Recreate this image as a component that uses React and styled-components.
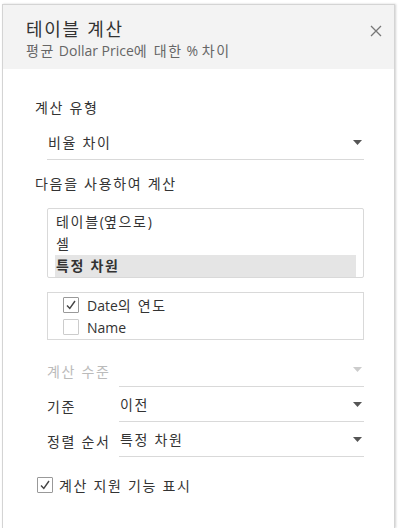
import React from 'react';
import styled, { createGlobalStyle } from 'styled-components';

const Global = createGlobalStyle`
  html, body { margin: 0; padding: 0; background: #fff; }
  body {
    font-family: "Open Sans", "Noto Sans CJK KR", sans-serif;
    color: #333;
  }
`;

const Caret = ({ disabled }) => (
  <svg width="9" height="5" viewBox="0 0 9 5">
    <path d="M0 0h9L4.5 5z" fill={disabled ? '#ccc' : '#555'} />
  </svg>
);

const Check = () => (
  <svg width="12" height="12" viewBox="0 0 12 12">
    <path d="M2 6.5l2.8 3L10 2" fill="none" stroke="#444" strokeWidth="1.4" />
  </svg>
);

const App = () => (
  <>
    <Global />
    <Panel>
      <Header>
        <div>
          <Title><K>테이블 계산</K></Title>
          <Subtitle>
            <K>평균</K> Dollar Price<K>에 대한</K> % <K>차이</K>
          </Subtitle>
        </div>
        <Close>
          <svg width="12" height="12" viewBox="0 0 12 12">
            <path d="M1 1l10 10M11 1L1 11" stroke="#777" strokeWidth="1.3" />
          </svg>
        </Close>
      </Header>
      <Body>
        <Label><K>계산 유형</K></Label>
        <Select indent>
          <K>비율 차이</K>
          <Caret />
        </Select>
        <Label top={14}><K>다음을 사용하여 계산</K></Label>
        <ListBox>
          <ListItem><K>테이블</K>(<K>옆으로</K>)</ListItem>
          <ListItem><K>셀</K></ListItem>
          <ListItem selected><K>특정 차원</K></ListItem>
        </ListBox>
        <CheckList>
          <CheckRow>
            <Box checked><Check /></Box>
            <span>Date<K>의 연도</K></span>
          </CheckRow>
          <CheckRow>
            <Box />
            Name
          </CheckRow>
        </CheckList>
        <Form>
          <FieldLabel disabled><K>계산 수준</K></FieldLabel>
          <Select>
            <span />
            <Caret disabled />
          </Select>
          <FieldLabel><K>기준</K></FieldLabel>
          <Select>
            <K>이전</K>
            <Caret />
          </Select>
          <FieldLabel><K>정렬 순서</K></FieldLabel>
          <Select>
            <K>특정 차원</K>
            <Caret />
          </Select>
        </Form>
        <Footer>
          <Box checked><Check /></Box>
          <K>계산 지원 기능 표시</K>
        </Footer>
      </Body>
    </Panel>
  </>
);

const K = styled.span`
  letter-spacing: 1.7px;
`;

const Panel = styled.div`
  margin: 4px 0 0 2px;
  width: 393px;
  height: 524px;
  box-sizing: border-box;
  border: 1px solid #d4d4d4;
  border-bottom: 0;
  box-shadow: 1px 0 2px rgba(0, 0, 0, 0.18);
  background: #fff;
`;

const Header = styled.div`
  display: flex;
  justify-content: space-between;
  align-items: flex-start;
  height: 64px;
  box-sizing: border-box;
  padding: 12px 12px 0 23px;
  background: #f3f3f3;
`;

const Title = styled.div`
  font-size: 18px;
  line-height: 24px;
  color: #333;
`;

const Subtitle = styled.div`
  font-size: 14px;
  line-height: 20px;
  color: #666;
`;

const Close = styled.div`
  display: flex;
  padding-top: 8px;
`;

const Body = styled.div`
  padding: 29px 30px 0 32px;
  font-size: 14px;
`;

const Label = styled.div`
  line-height: 20px;
  margin-top: ${p => p.top || 0}px;
`;

const Select = styled.div`
  display: flex;
  justify-content: space-between;
  align-items: center;
  height: 34px;
  box-sizing: border-box;
  padding: 0 2px 0 1px;
  margin-left: ${p => (p.indent ? 12 : 0)}px;
  margin-top: ${p => (p.indent ? 8 : 0)}px;
  border-bottom: 1px solid #d9d9d9;
  line-height: 20px;
`;

const ListBox = styled.div`
  margin: 14px 0 0 12px;
  height: 70px;
  box-sizing: border-box;
  border: 1px solid #d9d9d9;
  border-radius: 2px;
  padding: 2px 7px 0 7px;
`;

const ListItem = styled.div`
  line-height: 22px;
  padding-left: 1px;
  background: ${p => (p.selected ? '#e5e5e5' : 'transparent')};
  font-weight: ${p => (p.selected ? 700 : 400)};
`;

const CheckList = styled.div`
  margin: 14px 0 0 12px;
  height: 48px;
  box-sizing: border-box;
  border: 1px solid #d9d9d9;
  padding: 1px 0 0 15px;
`;

const CheckRow = styled.div`
  display: flex;
  align-items: center;
  gap: 8px;
  height: 22px;
`;

const Box = styled.span`
  display: inline-flex;
  align-items: center;
  justify-content: center;
  width: 14px;
  height: 14px;
  border: 1px solid ${p => (p.checked ? '#999' : '#ccc')};
  border-radius: 1px;
  background: #fff;
`;

const Form = styled.div`
  display: grid;
  grid-template-columns: 72px 1fr;
  align-items: end;
  margin: 13px 0 0 12px;
  row-gap: 1px;
`;

const FieldLabel = styled.div`
  line-height: 20px;
  padding-bottom: 5px;
  white-space: nowrap;
  color: ${p => (p.disabled ? '#bbb' : '#333')};
`;

const Footer = styled.div`
  display: flex;
  align-items: center;
  gap: 6px;
  margin: 18px 0 0 2px;
`;

export default App;
